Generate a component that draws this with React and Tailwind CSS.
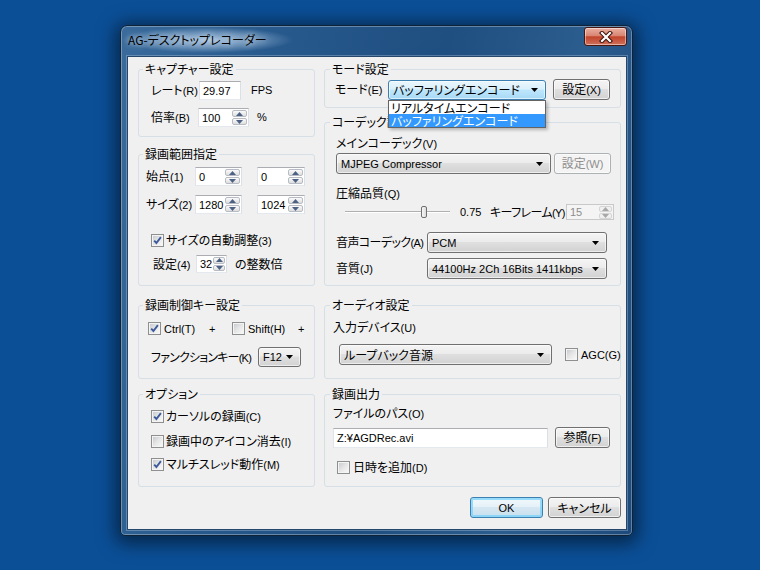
import React from "react";

const LAT = "font-['Liberation_Sans',sans-serif] text-[11px]";

function L({ t, className = "" }) {
  const m = t.match(/^(.*?)(\([^)]*\))$/);
  if (!m) return <span className={`whitespace-nowrap ${className}`}>{t}</span>;
  return (
    <span className={`whitespace-nowrap ${className}`}>
      {m[1]}
      <span className={LAT}>{m[2]}</span>
    </span>
  );
}

function Arrow() {
  return (
    <svg width="7" height="4" viewBox="0 0 7 4" className="shrink-0">
      <path d="M0 0H7L3.5 4Z" fill="#000" />
    </svg>
  );
}

function Combo({ children, className = "", focused = false, extra = null }) {
  const skin = focused
    ? "border-[#3c7fb1] bg-[linear-gradient(#eaf6fd_0%,#d9f0fc_45%,#bee6fd_50%,#a7d9f5_100%)]"
    : "border-[#707070] bg-[linear-gradient(#f4f4f4_0%,#ececec_45%,#dfdfdf_50%,#d2d2d2_100%)]";
  return (
    <div
      className={`relative flex shrink-0 items-center justify-between rounded-[3px] border pl-[4px] pr-[7px] shadow-[inset_0_0_0_1px_rgba(255,255,255,0.6)] ${skin} ${className}`}
    >
      <span className="whitespace-nowrap leading-[14px]">{children}</span>
      <Arrow />
      {extra}
    </div>
  );
}

function Button({ children, className = "", disabled = false, isDefault = false }) {
  let skin =
    "border-[#707070] text-black bg-[linear-gradient(#f4f4f4_0%,#ececec_45%,#dfdfdf_50%,#d2d2d2_100%)] shadow-[inset_0_0_0_1px_rgba(255,255,255,0.65)]";
  if (disabled)
    skin = "border-[#adb2b5] text-[#8f8f8f] bg-[#f4f4f4] shadow-[inset_0_0_0_1px_rgba(255,255,255,0.5)]";
  if (isDefault)
    skin =
      "border-[#3c7fb1] text-black bg-[linear-gradient(#f2f9fc_0%,#e5f1f8_45%,#d5e7f2_50%,#c9dfee_100%)] shadow-[inset_0_0_0_2px_rgba(120,210,250,0.75)]";
  return (
    <div
      className={`flex shrink-0 items-center justify-center rounded-[3px] border leading-[14px] whitespace-nowrap ${skin} ${className}`}
    >
      {children}
    </div>
  );
}

function TextBox({ children, className = "" }) {
  return (
    <div
      className={`flex shrink-0 items-center border border-[#abadb3] border-l-[#e2e3ea] border-r-[#dbdfe6] border-b-[#e3e9ef] bg-white pl-[3px] leading-[14px] whitespace-nowrap ${className}`}
    >
      {children}
    </div>
  );
}

function Tri({ up, color }) {
  return (
    <svg width="7" height="4" viewBox="0 0 7 4">
      {up ? <path d="M3.5 0L7 4H0Z" fill={color} /> : <path d="M0 0H7L3.5 4Z" fill={color} />}
    </svg>
  );
}

function Spin({ value, className = "", disabled = false, arrowW = "w-[17px]" }) {
  const color = disabled ? "#a8a8a8" : "#4d6185";
  const box = disabled
    ? "border-[#c9c9c9] bg-[#f4f4f4] text-[#8d8d8d]"
    : "border-[#abadb3] border-l-[#e2e3ea] border-r-[#dbdfe6] border-b-[#e3e9ef] bg-white text-black";
  const btn = disabled
    ? "border-[#d5d5d5] bg-[#f0f0f0]"
    : "border-[#b7bcc4] bg-[linear-gradient(#fbfbfb_0%,#ececec_50%,#dedede_100%)]";
  return (
    <div className={`flex shrink-0 border ${box} ${className}`}>
      <div className={`flex flex-1 items-center pl-[3px] leading-[14px] ${LAT}`}>{value}</div>
      <div className={`flex flex-col gap-[1px] p-[1px] ${arrowW}`}>
        <div className={`flex flex-1 items-center justify-center rounded-[2px] border ${btn}`}>
          <Tri up color={color} />
        </div>
        <div className={`flex flex-1 items-center justify-center rounded-[2px] border ${btn}`}>
          <Tri color={color} />
        </div>
      </div>
    </div>
  );
}

function Check({ checked = false }) {
  return (
    <div className="h-[13px] w-[13px] shrink-0 border border-[#8e8f8f] bg-[#f4f4f4] p-[1px]">
      <div className="flex h-full w-full items-center justify-center bg-[linear-gradient(135deg,#c9ccd1_0%,#e6e6e6_50%,#f7f7f7_100%)]">
        {checked && (
          <svg width="9" height="9" viewBox="0 0 9 9">
            <path d="M1.2 4.6L3.4 7L7.9 1.2" stroke="#3d5a9c" strokeWidth="1.9" fill="none" />
          </svg>
        )}
      </div>
    </div>
  );
}

function GroupBox({ title, className = "", titleLeft = "left-[4px]", children }) {
  return (
    <div className={`relative rounded-[3px] border border-[#d5dfe5] ${className}`}>
      <span className={`absolute top-[-8px] bg-[#f0f0f0] px-[2px] leading-[14px] whitespace-nowrap ${titleLeft}`}>
        {title}
      </span>
      {children}
    </div>
  );
}

function CloseButton() {
  return (
    <div className="mt-[1px] flex h-[19px] w-[43px] items-center justify-center rounded-[3px] border border-[#4a1710] bg-[linear-gradient(#eab0a3_0%,#d98572_45%,#c2442c_52%,#d0705b_100%)] shadow-[inset_0_0_0_1px_rgba(255,255,255,0.45)]">
      <svg width="14" height="12" viewBox="0 0 14 12">
        <path d="M3 2L11 10M11 2L3 10" stroke="#3b0f08" strokeWidth="4.2" strokeLinecap="square" />
        <path d="M3 2L11 10M11 2L3 10" stroke="#ffffff" strokeWidth="2.2" strokeLinecap="square" />
      </svg>
    </div>
  );
}

export default function App() {
  return (
    <div className="h-[570px] w-[760px] overflow-hidden bg-[#0b4f97] pl-[120px] pt-[25px] font-['Noto_Sans_CJK_JP',sans-serif] text-[12px] text-black [font-feature-settings:'palt']">
      <div className="flex h-[511px] w-[513px] flex-col rounded-t-[7px] rounded-b-[5px] border border-[#0e2338] bg-[linear-gradient(100deg,#3a6b9c_0%,#285a8d_25%,#1f4e80_55%,#2c5d8f_78%,#1d4a7b_100%)] pb-[5px] pl-[6px] pr-[5px] shadow-[inset_0_0_0_1px_rgba(255,255,255,0.3),0_3px_18px_5px_rgba(0,0,0,0.5)]">
        {/* title bar */}
        <div className="flex h-[30px] shrink-0 items-start justify-between">
          <span className="-ml-[6px] mt-[1px] py-[6px] pl-[7px] pr-[26px] leading-[14px] whitespace-nowrap bg-[radial-gradient(closest-side,rgba(200,222,244,0.75),rgba(200,222,244,0.35)_60%,rgba(200,222,244,0))] [text-shadow:0_0_6px_rgba(255,255,255,0.9)]">
            AG-デスクトップレコーダー
          </span>
          <CloseButton />
        </div>

        {/* client */}
        <div className="flex h-[474px] w-[500px] flex-col border border-[#24476b] bg-[#f0f0f0] pl-[10px] pr-[5px] pt-[12px] shadow-[0_0_0_1px_rgba(190,210,230,0.35)]">
          <div className="flex gap-[9px]">
            {/* left column */}
            <div className="flex w-[177px] flex-col">
              <GroupBox title="キャプチャー設定" className="h-[68px]">
                <div className="mt-[11px] flex h-[19px] items-center pl-[12px]">
                  <L t="レート(R)" className="w-[48px]" />
                  <TextBox className={`h-[19px] w-[42px] ${LAT}`}>29.97</TextBox>
                  <span className={`ml-[10px] ${LAT}`}>FPS</span>
                </div>
                <div className="mt-[8px] flex h-[19px] items-center pl-[12px]">
                  <L t="倍率(B)" className="w-[47px]" />
                  <Spin value="100" className="h-[19px] w-[51px]" />
                  <span className={`ml-[8px] ${LAT}`}>%</span>
                </div>
              </GroupBox>

              <GroupBox title="録画範囲指定" className="mt-[17px] h-[132px]">
                <div className="mt-[12px] flex h-[19px] items-center pl-[7px]">
                  <L t="始点(1)" className="w-[49px]" />
                  <Spin value="0" className="h-[19px] w-[47px]" />
                  <Spin value="0" className="ml-[15px] h-[19px] w-[48px]" />
                </div>
                <div className="mt-[9px] flex h-[19px] items-center pl-[7px]">
                  <L t="サイズ(2)" className="w-[49px]" />
                  <Spin value="1280" className="h-[19px] w-[47px]" />
                  <Spin value="1024" className="ml-[15px] h-[19px] w-[48px]" />
                </div>
                <div className="mt-[20px] flex h-[13px] items-center pl-[12px]">
                  <Check checked />
                  <L t="サイズの自動調整(3)" className="ml-[2px] leading-[14px]" />
                </div>
                <div className="mt-[8px] flex h-[18px] items-center pl-[14px]">
                  <L t="設定(4)" className="w-[43px]" />
                  <Spin value="32" className="h-[18px] w-[31px]" arrowW="w-[14px]" />
                  <span className="ml-[8px]">の整数倍</span>
                </div>
              </GroupBox>

              <GroupBox title="録画制御キー設定" className="mt-[19px] h-[74px]">
                <div className="mt-[16px] flex h-[13px] items-center pl-[9px]">
                  <Check checked />
                  <span className={`ml-[3px] w-[45px] leading-[14px] ${LAT}`}>Ctrl(T)</span>
                  <span className={`w-[23px] leading-[14px] ${LAT}`}>+</span>
                  <Check />
                  <span className={`ml-[3px] w-[50px] leading-[14px] ${LAT}`}>Shift(H)</span>
                  <span className={`leading-[14px] ${LAT}`}>+</span>
                </div>
                <div className="mt-[12px] flex h-[20px] items-center pl-[12px]">
                  <L t="ファンクションキー(K)" className="w-[107px] tracking-[-0.8px]" />
                  <Combo className={`h-[20px] w-[43px] ${LAT}`}>F12</Combo>
                </div>
              </GroupBox>

              <GroupBox title="オプション" className="mt-[15px] h-[93px]">
                <div className="mt-[15px] flex h-[13px] items-center pl-[12px]">
                  <Check checked />
                  <L t="カーソルの録画(C)" className="ml-[2px] leading-[14px]" />
                </div>
                <div className="mt-[12px] flex h-[13px] items-center pl-[12px]">
                  <Check />
                  <L t="録画中のアイコン消去(I)" className="ml-[2px] leading-[14px]" />
                </div>
                <div className="mt-[10px] flex h-[13px] items-center pl-[12px]">
                  <Check checked />
                  <L t="マルチスレッド動作(M)" className="ml-[2px] leading-[14px]" />
                </div>
              </GroupBox>
            </div>

            {/* right column */}
            <div className="flex w-[297px] flex-col">
              <GroupBox title="モード設定" className="z-10 h-[39px]" titleLeft="left-[5px]">
                <div className="mt-[9px] flex h-[21px] items-center pl-[10px]">
                  <L t="モード(E)" className="w-[53px]" />
                  <Combo
                    className="h-[20px] w-[158px]"
                    focused
                    extra={
                      <div className="absolute left-[-1px] top-[19px] w-[158px] border border-[#646464] bg-white shadow-[2px_2px_3px_rgba(0,0,0,0.25)]">
                        <div className="h-[13px] pl-[2px] leading-[13px] whitespace-nowrap">リアルタイムエンコード</div>
                        <div className="h-[13px] bg-[#3399ff] pl-[2px] leading-[13px] whitespace-nowrap text-white">
                          バッファリングエンコード
                        </div>
                      </div>
                    }
                  >
                    バッファリングエンコード
                  </Combo>
                  <Button className="ml-[7px] h-[21px] w-[57px]">
                    <L t="設定(X)" />
                  </Button>
                </div>
              </GroupBox>

              <GroupBox title="コーデック設定" className="mt-[14px] h-[164px]" titleLeft="left-[5px]">
                <div className="mt-[13px] h-[14px] pl-[11px] leading-[14px]">
                  <L t="メインコーデック(V)" />
                </div>
                <div className="mt-[3px] flex h-[21px] items-center pl-[11px]">
                  <Combo className={`h-[21px] w-[215px] ${LAT}`}>MJPEG Compressor</Combo>
                  <Button disabled className="ml-[3px] h-[21px] w-[57px]">
                    <L t="設定(W)" />
                  </Button>
                </div>
                <div className="mt-[12px] h-[14px] pl-[11px] leading-[14px]">
                  <L t="圧縮品質(Q)" />
                </div>
                <div className="mt-[4px] flex h-[16px] items-center pl-[20px]">
                  <div className="relative h-[16px] w-[105px]">
                    <div className="mt-[7px] h-[2px] w-full border-t border-[#b0b0b0] bg-[#e8e8e8] border-b border-b-white"></div>
                    <div className="absolute left-[76px] top-[2px] h-[12px] w-[6px] rounded-[2px] border border-[#707070] bg-[linear-gradient(90deg,#f7f7f7,#dcdcdc)]"></div>
                  </div>
                  <span className={`ml-[10px] w-[30px] leading-[14px] ${LAT}`}>0.75</span>
                  <L t="キーフレーム(Y)" className="w-[76px] leading-[14px] tracking-[-0.6px]" />
                  <Spin value="15" disabled className="h-[16px] w-[48px]" arrowW="w-[15px]" />
                </div>
                <div className="mt-[12px] flex h-[21px] items-center pl-[11px]">
                  <L t="音声コーデック(A)" className="w-[91px] tracking-[-0.6px]" />
                  <Combo className={`h-[21px] w-[180px] ${LAT}`}>PCM</Combo>
                </div>
                <div className="mt-[5px] flex h-[21px] items-center pl-[11px]">
                  <L t="音質(J)" className="w-[91px]" />
                  <Combo className={`h-[21px] w-[180px] ${LAT}`}>44100Hz 2Ch 16Bits 1411kbps</Combo>
                </div>
              </GroupBox>

              <GroupBox title="オーディオ設定" className="mt-[19px] h-[74px]" titleLeft="left-[5px]">
                <div className="mt-[14px] h-[14px] pl-[8px] leading-[14px]">
                  <L t="入力デバイス(U)" />
                </div>
                <div className="mt-[10px] flex h-[21px] items-center pl-[14px]">
                  <Combo className="h-[21px] w-[213px]">ループバック音源</Combo>
                  <div className="ml-[13px]">
                    <Check />
                  </div>
                  <span className={`ml-[3px] leading-[14px] ${LAT}`}>AGC(G)</span>
                </div>
              </GroupBox>

              <GroupBox title="録画出力" className="mt-[15px] h-[93px]" titleLeft="left-[5px]">
                <div className="mt-[11px] h-[14px] pl-[8px] leading-[14px]">
                  <L t="ファイルのパス(O)" />
                </div>
                <div className="mt-[7px] flex h-[21px] items-center pl-[8px]">
                  <TextBox className={`h-[20px] w-[215px] ${LAT}`}>Z:¥AGDRec.avi</TextBox>
                  <Button className="ml-[7px] h-[21px] w-[55px]">
                    <L t="参照(F)" />
                  </Button>
                </div>
                <div className="mt-[13px] flex h-[13px] items-center pl-[12px]">
                  <Check />
                  <L t="日時を追加(D)" className="ml-[3px] leading-[14px]" />
                </div>
              </GroupBox>
            </div>
          </div>

          <div className="mt-[10px] flex justify-end gap-[5px]">
            <Button isDefault className={`h-[21px] w-[73px] ${LAT}`}>
              OK
            </Button>
            <Button className="h-[21px] w-[73px]">キャンセル</Button>
          </div>
        </div>
      </div>
    </div>
  );
}
